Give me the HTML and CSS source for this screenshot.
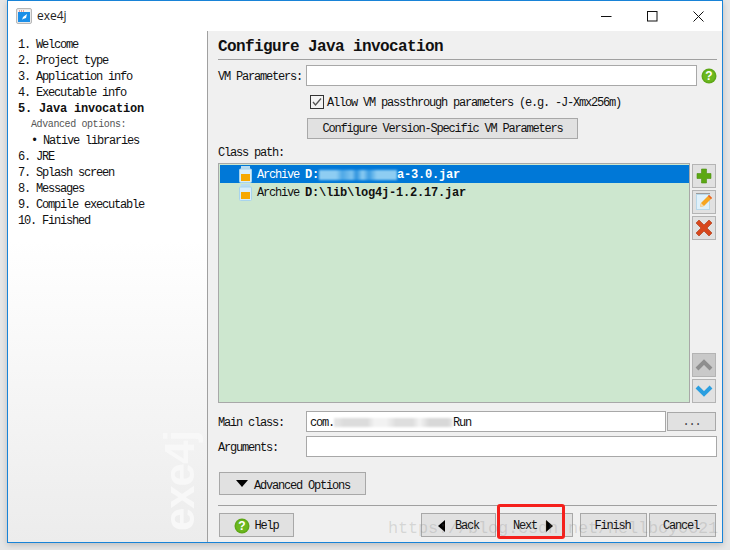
FILE: index.html
```html
<!DOCTYPE html>
<html lang="en">
<head>
<meta charset="utf-8">
<title>exe4j</title>
<link rel="stylesheet" href="styles.css">
</head>
<body>
<div class="window">
  <header class="titlebar">
    <svg class="app-icon" width="16" height="16" viewBox="0 0 16 16"><rect x=".5" y=".5" width="15" height="15" rx="1.5" fill="#e8e8e8" stroke="#b8b8b8"/><rect x="2" y="4" width="12" height="10" fill="#1d8fe8"/><rect x="2" y="2" width="12" height="2" fill="#f4f4f4"/><path d="M3 3h1M5 3h1M7 3h1" stroke="#e0503c"/><path d="M6 12l1-3 4-3-1 4-3 1z" fill="#fff"/></svg>
    <span class="app-name">exe4j</span>
    <div class="controls">
      <svg width="11" height="11" viewBox="0 0 11 11"><path d="M0 5.500h10.500" stroke="#111"/></svg>
      <svg width="11" height="11" viewBox="0 0 11 11"><rect x=".5" y=".5" width="9.500" height="9.500" fill="none" stroke="#111"/></svg>
      <svg width="11" height="11" viewBox="0 0 11 11"><path d="M.5.5l10 10M10.500.5l-10 10" stroke="#111" fill="none"/></svg>
    </div>
  </header>
  <div class="body">
    <nav class="sidebar">
      <div class="step">1. Welcome</div>
      <div class="step">2. Project type</div>
      <div class="step">3. Application info</div>
      <div class="step">4. Executable info</div>
      <div class="step current">5. Java invocation</div>
      <div class="step sub-title">Advanced options:</div>
      <div class="step sub-item">&bull; Native libraries</div>
      <div class="step">6. JRE</div>
      <div class="step">7. Splash screen</div>
      <div class="step">8. Messages</div>
      <div class="step">9. Compile executable</div>
      <div class="step">10. Finished</div>
      <div class="brand">exe4j</div>
    </nav>
    <main class="main">
      <h1 class="heading">Configure Java invocation</h1>
      <div class="form-row first-row">
        <label class="field-label">VM Parameters:</label>
        <div class="input"></div>
        <svg class="help-icon" width="16" height="16" viewBox="0 0 16 16"><circle cx="8" cy="8" r="7.500" fill="#5fa818"/><circle cx="8" cy="8" r="6" fill="#6cb81e"/><text x="8" y="12" class="q-mark" text-anchor="middle">?</text></svg>
      </div>
      <div class="check-row">
        <span class="checkbox"><svg width="12" height="12" viewBox="0 0 12 12"><path d="M2 6l2.500 3 5.500-6.500" fill="none" stroke="#555" stroke-width="1.300"/></svg></span>
        <span class="check-text">Allow VM passthrough parameters (e.g. -J-Xmx256m)</span>
      </div>
      <button class="btn version-btn">Configure Version-Specific VM Parameters</button>
      <div class="field-label path-label">Class path:</div>
      <div class="list-row">
        <div class="list">
          <div class="list-item selected">
            <svg class="jar" width="14" height="17" viewBox="0 0 14 17"><rect x="2" y="0" width="9" height="3" fill="#b8dcf0"/><rect x=".5" y="3" width="12" height="13.500" rx="1" fill="#d8eefa" stroke="#a8d4ec"/><rect x="2" y="8" width="9" height="7" fill="#f6a800"/></svg>
            <span class="kind">Archive</span><b class="path">D:<span class="smudge smudge-blue"></span>a-3.0.jar</b>
          </div>
          <div class="list-item">
            <svg class="jar" width="14" height="17" viewBox="0 0 14 17"><rect x="2" y="0" width="9" height="3" fill="#b8dcf0"/><rect x=".5" y="3" width="12" height="13.500" rx="1" fill="#d8eefa" stroke="#a8d4ec"/><rect x="2" y="8" width="9" height="7" fill="#f6a800"/></svg>
            <span class="kind">Archive</span><b class="path">D:\lib\log4j-1.2.17.jar</b>
          </div>
        </div>
        <div class="side-tools">
          <div class="tool-group">
            <button class="tool"><svg width="16" height="16" viewBox="0 0 16 16"><path d="M5.500 1h5v4.500H15v5h-4.500V15h-5v-4.500H1v-5h4.500z" fill="#5ca813" stroke="#4c8f10" stroke-width=".6"/></svg></button>
            <button class="tool"><svg width="18" height="20" viewBox="0 0 18 20"><rect x="1.500" y="2.500" width="13" height="15" fill="#dff1fb" stroke="#b8d8ea"/><path d="M1.500 1.500h13" stroke="#555" stroke-dasharray="1 1"/><path d="M5 15l1-4 8-8 3 3-8 8z" fill="#f6a623"/><path d="M5 15l1-4 3 3z" fill="#f5dcb0"/><path d="M13 4l3 3 1-1-3-3z" fill="#e85c30"/></svg></button>
            <button class="tool"><svg width="18" height="18" viewBox="0 0 18 18"><path d="M1 4l3-3 5 5 5-5 3 3-5 5 5 5-3 3-5-5-5 5-3-3 5-5z" fill="#d8471c" stroke="#a8350f" stroke-width=".6"/></svg></button>
          </div>
          <div class="tool-group">
            <button class="tool disabled"><svg width="18" height="12" viewBox="0 0 18 12"><path d="M2 10l7-7 7 7" fill="none" stroke="#8e8e8e" stroke-width="4"/></svg></button>
            <button class="tool"><svg width="18" height="12" viewBox="0 0 18 12"><path d="M2 2l7 7 7-7" fill="none" stroke="#2b9fe0" stroke-width="4"/></svg></button>
          </div>
        </div>
      </div>
      <div class="form-row main-row">
        <label class="field-label">Main class:</label>
        <div class="input main-input">com.<span class="smudge smudge-grey"></span>Run</div>
        <button class="btn browse">...</button>
      </div>
      <div class="form-row args-row">
        <label class="field-label">Arguments:</label>
        <div class="input"></div>
      </div>
      <button class="btn advanced"><span class="tri-down"></span><span class="adv-text">Advanced Options</span></button>
      <div class="rule"></div>
      <div class="footer">
        <button class="btn help"><svg width="16" height="16" viewBox="0 0 16 16"><circle cx="8" cy="8" r="7.500" fill="#5fa818"/><circle cx="8" cy="8" r="6" fill="#6cb81e"/><text x="8" y="12" class="q-mark" text-anchor="middle">?</text></svg>Help</button>
        <div class="nav-buttons">
          <button class="btn back"><span class="tri-left"></span>Back</button>
          <button class="btn next">Next<span class="tri-right"></span></button>
          <button class="btn finish">Finish</button>
          <button class="btn cancel">Cancel</button>
        </div>
      </div>
    </main>
  </div>
</div>
<div class="highlight"></div>
<div class="watermark">https://blog.csdn.net/hellboy0621</div>
</body>
</html>
```

FILE: styles.css
```css
* { box-sizing: border-box; }
html, body { margin: 0; height: 550px; overflow: hidden; }
body {
  background: #e6e6e6;
  position: relative;
  font-family: "Liberation Mono", "DejaVu Sans Mono", monospace;
  font-size: 12px;
  letter-spacing: -1.2px;
  color: #111;
}
.window {
  margin-left: 7px;
  width: 716px;
  height: 543px;
  border: 1px solid #1883d7;
  background: #f0f0f0;
  display: flex;
  flex-direction: column;
  box-shadow: 0 2px 6px rgba(0,0,0,.18);
}
.titlebar {
  height: 30px;
  background: #fff;
  display: flex;
  align-items: center;
  padding-left: 8px;
  flex: none;
}
.app-icon { margin-top: -1px; }
.app-name {
  margin: -2px 0 0 5px;
  font-family: "Open Sans", "Liberation Sans", sans-serif;
  font-size: 12px;
  letter-spacing: 0;
  color: #222;
}
.controls {
  margin-left: auto;
  margin-right: 18px;
  display: flex;
  gap: 35px;
}
.body { flex: 1; display: flex; min-height: 0; }
.sidebar {
  width: 200px;
  flex: none;
  position: relative;
  overflow: hidden;
  border-right: 1px solid #a0a0a0;
  padding: 6px 0 0 10px;
  background: linear-gradient(#fff 0, #fff 210px, #ececec 100%);
}
.step { height: 16px; line-height: 16px; white-space: nowrap; }
.current { font-weight: bold; letter-spacing: -.2px; }
.sub-title { padding-left: 13px; font-size: 10px; letter-spacing: -.4px; color: #555; }
.sub-item { padding-left: 13px; }
.brand {
  position: absolute;
  right: 6px;
  bottom: 11px;
  writing-mode: vertical-rl;
  transform: rotate(180deg);
  font-family: "Liberation Sans", sans-serif;
  font-weight: bold;
  font-size: 42px;
  line-height: 42px;
  letter-spacing: -1px;
  color: #f8f8f8;
}
.main { flex: 1; min-width: 0; padding: 0 5px 0 10px; }
.heading {
  margin: 5px 0 0;
  height: 24px;
  line-height: 22px;
  font-size: 16px;
  letter-spacing: -.6px;
  border-bottom: 1px solid #a0a0a0;
  font-weight: bold;
}
.form-row { display: flex; align-items: center; height: 21px; }
.first-row { margin-top: 5px; }
.field-label { display: block; width: 88px; flex: none; padding-top: 2px; }
.input {
  flex: 1;
  height: 21px;
  line-height: 23px;
  padding-left: 3px;
  border: 1px solid #a8a8a8;
  background: #fff;
  white-space: nowrap;
  min-width: 0;
}
.help-icon { margin-left: 4px; flex: none; }
.q-mark {
  fill: #fff;
  font: bold 12px "Liberation Sans", sans-serif;
  letter-spacing: 0;
}
.check-row {
  margin: 9px 0 0 92px;
  height: 14px;
  display: flex;
  align-items: center;
  gap: 3px;
  white-space: pre;
}
.check-text { padding-top: 2px; }
.checkbox {
  width: 14px;
  height: 14px;
  border: 1px solid #333;
  background: #f4f4f4;
  display: block;
  flex: none;
}
.checkbox svg { display: block; }
.btn {
  display: block;
  height: 21px;
  padding: 0;
  border: 1px solid #a8a8a8;
  background: #e1e1e1;
  font: inherit;
  letter-spacing: inherit;
  color: inherit;
  text-align: center;
}
.version-btn { margin: 9px 0 0 89px; width: 271px; padding-top: 1px; }
.path-label { margin-top: 6px; width: auto; height: 16px; line-height: 16px; padding-top: 0; }
.list-row { margin-top: 2px; height: 240px; display: flex; gap: 2px; }
.list {
  width: 472px;
  border: 1px solid #a8a8a8;
  background: #cde7cf;
  padding: 1px 0 0 1px;
}
.list-item {
  height: 18px;
  display: flex;
  align-items: center;
  padding-left: 19px;
  white-space: pre;
}
.kind { margin-left: 4px; padding-top: 2px; }
.path { margin-left: 6px; padding-top: 2px; display: flex; align-items: center; letter-spacing: -.2px; }
.selected { background: #0078d7; color: #fff; }
.jar { flex: none; }
.smudge { display: inline-block; height: 10px; filter: blur(1.200px); }
.smudge-blue {
  width: 78px;
  background: linear-gradient(90deg, #8ecdf2 0 22%, #4ea8e6 30%, #7fc4f0 42%, #2e93de 48%, #8ecdf2 56%, #3c9ce2 64%, #8ecdf2 74%, #8ecdf2 100%);
}
.smudge-grey {
  width: 119px;
  height: 9px;
  vertical-align: middle;
  background: linear-gradient(90deg, #e4e4e4 0 4%, #dcdcdc 8% 28%, #f2f2f2 34% 44%, #dedede 52% 66%, #f4f4f4 72%, #d8d8d8 80% 96%, #eee 100%);
}
.side-tools { width: 24px; display: flex; flex-direction: column; justify-content: space-between; padding-top: 1px; }
.tool-group { display: flex; flex-direction: column; gap: 2px; }
.tool {
  width: 24px;
  height: 24px;
  padding: 0;
  border: 1px solid #b4b4b4;
  background: #e1e1e1;
  display: flex;
  align-items: center;
  justify-content: center;
}
.tool.disabled { background: #c9c9c9; }
.main-row { margin-top: 8px; }
.main-input { flex: none; width: 360px; }
.browse { width: 49px; height: 19px; margin-left: 1px; color: #444; line-height: 14px; }
.args-row { margin-top: 4px; }
.advanced {
  margin: 15px 0 0 1px;
  width: 147px;
  height: 23px;
  display: flex;
  align-items: center;
  padding-left: 16px;
}
.adv-text { padding-top: 4px; }
.tri-down {
  border-left: 6px solid transparent;
  border-right: 6px solid transparent;
  border-top: 7px solid #000;
  margin-right: 6px;
}
.rule { margin-top: 10px; height: 1px; background: #a0a0a0; }
.footer {
  margin: 7px 1px 0 1px;
  display: flex;
  justify-content: space-between;
}
.footer .btn { height: 24px; display: flex; align-items: center; justify-content: center; padding-top: 1px; }
.help { width: 75px; gap: 4px; }
.nav-buttons { display: flex; }
.back { width: 75px; gap: 10px; }
.next { width: 76px; gap: 9px; margin-left: 1px; padding-right: 4px; }
.finish { width: 67px; margin-left: 7px; padding-right: 2px; }
.cancel { width: 67px; margin-left: 2px; padding-right: 3px; }
.tri-left {
  border-top: 6px solid transparent;
  border-bottom: 6px solid transparent;
  border-right: 7px solid #000;
}
.tri-right {
  border-top: 6px solid transparent;
  border-bottom: 6px solid transparent;
  border-left: 7px solid #000;
}
.highlight {
  position: absolute;
  left: 497px;
  top: 504px;
  width: 68px;
  height: 35px;
  border: 3px solid #f5201c;
  border-radius: 3px;
}
.watermark {
  position: absolute;
  left: 388px;
  top: 519px;
  font-size: 17px;
  letter-spacing: -.2px;
  color: rgba(120,120,120,.22);
  font-family: "Liberation Mono", monospace;
  white-space: nowrap;
}
```
